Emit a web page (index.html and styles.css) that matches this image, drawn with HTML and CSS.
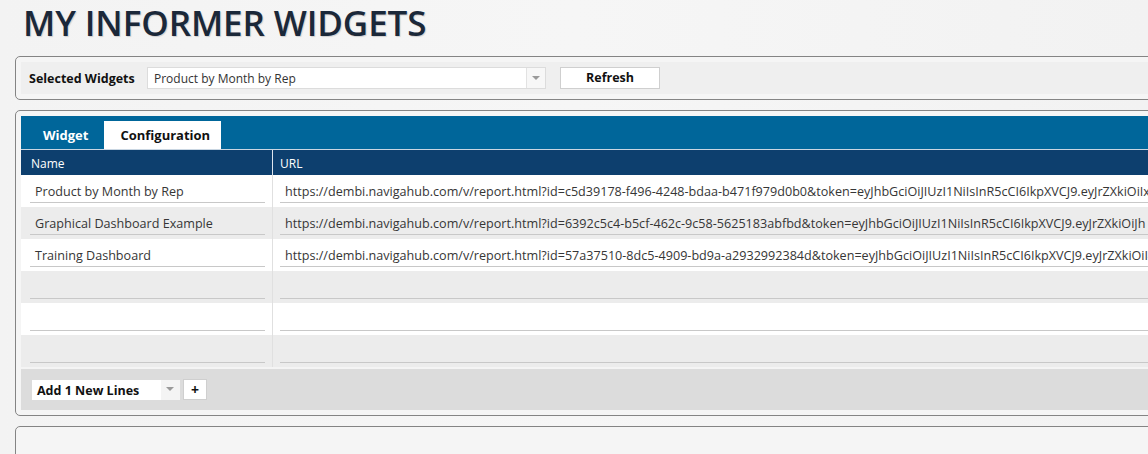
FILE: index.html
```html
<!DOCTYPE html>
<html lang="en">
<head>
<meta charset="utf-8">
<title>My Informer Widgets</title>
<link rel="stylesheet" href="styles.css">
</head>
<body>
<h1 class="title">MY INFORMER WIDGETS</h1>

<section class="panel">
  <div class="select-bar">
    <span class="select-label">Selected Widgets</span>
    <div class="combo combo-widgets">
      <span class="combo-text">Product by Month by Rep</span>
      <span class="combo-arrow"></span>
    </div>
    <button class="btn btn-refresh" type="button">Refresh</button>
  </div>
</section>

<section class="panel">
  <div class="tabs">
    <span class="tab">Widget</span>
    <span class="tab tab-active">Configuration</span>
  </div>
  <div class="grid">
    <div class="grid-row grid-head">
      <div class="cell cell-name">Name</div>
      <div class="cell cell-url">URL</div>
    </div>
    <div class="grid-row">
      <div class="cell cell-name"><div class="field">Product by Month by Rep</div></div>
      <div class="cell cell-url"><div class="field">https://dembi.navigahub.com/v/report.html?id=c5d39178-f496-4248-bdaa-b471f979d0b0&amp;token=eyJhbGciOiJIUzI1NiIsInR5cCI6IkpXVCJ9.eyJrZXkiOiIx</div></div>
    </div>
    <div class="grid-row alt">
      <div class="cell cell-name"><div class="field">Graphical Dashboard Example</div></div>
      <div class="cell cell-url"><div class="field">https://dembi.navigahub.com/v/report.html?id=6392c5c4-b5cf-462c-9c58-5625183abfbd&amp;token=eyJhbGciOiJIUzI1NiIsInR5cCI6IkpXVCJ9.eyJrZXkiOiJh</div></div>
    </div>
    <div class="grid-row">
      <div class="cell cell-name"><div class="field">Training Dashboard</div></div>
      <div class="cell cell-url"><div class="field">https://dembi.navigahub.com/v/report.html?id=57a37510-8dc5-4909-bd9a-a2932992384d&amp;token=eyJhbGciOiJIUzI1NiIsInR5cCI6IkpXVCJ9.eyJrZXkiOiI4</div></div>
    </div>
    <div class="grid-row alt">
      <div class="cell cell-name"><div class="field"></div></div>
      <div class="cell cell-url"><div class="field"></div></div>
    </div>
    <div class="grid-row">
      <div class="cell cell-name"><div class="field"></div></div>
      <div class="cell cell-url"><div class="field"></div></div>
    </div>
    <div class="grid-row alt">
      <div class="cell cell-name"><div class="field"></div></div>
      <div class="cell cell-url"><div class="field"></div></div>
    </div>
  </div>
  <div class="grid-footer">
    <div class="combo combo-lines">
      <span class="combo-text">Add 1 New Lines</span>
      <span class="combo-arrow"></span>
    </div>
    <button class="btn btn-plus" type="button">+</button>
  </div>
</section>

<section class="panel panel-empty"></section>
</body>
</html>
```

FILE: styles.css
```css
html, body {
  margin: 0;
  padding: 0;
}
body {
  width: 1148px;
  height: 454px;
  overflow: hidden;
  background: linear-gradient(90deg, #f3f3f3 0%, #f6f6f6 50%, #f2f2f2 100%);
  font-family: "Open Sans", "Noto Sans", "DejaVu Sans", sans-serif;
  color: #333;
}

.title {
  margin: 0;
  height: 56px;
  padding-left: 23px;
  font-family: "Open Sans", "Noto Sans", sans-serif;
  font-size: 35px;
  font-weight: 600;
  line-height: 45px;
  color: #1b2839;
  letter-spacing: -0.1px;
  text-shadow: 1px 1px 1px rgba(0, 0, 0, 0.15);
}

.panel {
  box-sizing: border-box;
  width: 1220px;
  margin: 0 0 10px 15px;
  padding: 5px;
  border: 1px solid #848484;
  border-radius: 5px;
  background: #f5f5f5;
}

/* selection bar */
.select-bar {
  height: 32px;
  display: flex;
  align-items: center;
  background: #efefef;
  padding-left: 8px;
}
.select-label {
  font-size: 12.5px;
  font-weight: 700;
  color: #111;
  width: 118px;
  padding-top: 1px;
}
.combo {
  display: flex;
  align-items: stretch;
  background: #fff;
  border: 1px solid #dcdcdc;
  box-sizing: border-box;
}
.combo-widgets {
  width: 399px;
  height: 22px;
}
.combo-text {
  flex: 1;
  font-size: 12px;
  line-height: 20px;
  padding: 1px 0 0 6px;
  color: #333;
  white-space: nowrap;
}
.combo-arrow {
  width: 18px;
  border-left: 1px solid #e2e2e2;
  background: #f7f7f7;
  position: relative;
}
.combo-arrow::after {
  content: "";
  position: absolute;
  left: 5px;
  top: 8px;
  border-left: 4px solid transparent;
  border-right: 4px solid transparent;
  border-top: 4px solid #9a9a9a;
}
.btn {
  font-family: "Open Sans", "Noto Sans", sans-serif;
  background: #fff;
  border: 1px solid #cfcfcf;
  color: #111;
  font-weight: 700;
  padding: 0;
  box-sizing: border-box;
}
.btn-refresh {
  margin-left: 14px;
  width: 100px;
  height: 22px;
  font-size: 12.5px;
  line-height: 18px;
}

/* tabs */
.tabs {
  height: 33px;
  display: flex;
  align-items: flex-end;
  background: #00669a;
  border-bottom: 1px solid #c9d6e2;
  padding-left: 6px;
}
.tab {
  height: 28px;
  line-height: 29px;
  padding: 0 16px;
  font-size: 13px;
  font-weight: 700;
  color: #fff;
}
.tab-active {
  background: #fff;
  color: #111;
  padding: 0 16px;
  width: 85px;
  text-align: center;
}

/* grid */
.grid {
  border-bottom: 2px solid #f4f4f4;
}
.grid-row {
  display: flex;
  height: 32px;
  background: #fff;
}
.grid-row.alt {
  background: #ececec;
}
.grid-head {
  height: 25px;
  background: #0d3f6e;
  color: #fff;
  font-size: 12px;
  line-height: 25px;
}
.cell {
  box-sizing: border-box;
}
.grid-head .cell {
  padding-top: 1px;
}
.cell-name {
  width: 252px;
  border-right: 1px solid #e0e0e0;
  padding: 0 7px 0 9px;
}
.cell-url {
  flex: 1;
  padding: 0 0 0 7px;
  overflow: hidden;
}
.grid-head .cell-name {
  padding-left: 10px;
  border-right-color: #dfe6ee;
}
.grid-head .cell-url {
  padding-left: 7px;
}
.field {
  height: 28px;
  box-sizing: border-box;
  border-bottom: 1px solid #c8c8c8;
  padding: 7px 0 0 5px;
  font-size: 12.6px;
  line-height: 19px;
  color: #363636;
  white-space: nowrap;
  overflow: hidden;
}

/* footer */
.grid-footer {
  height: 41px;
  display: flex;
  align-items: center;
  background: #dcdcdc;
  padding-left: 11px;
}
.combo-lines {
  width: 148px;
  height: 20px;
  border: none;
}
.combo-lines .combo-text {
  font-size: 12.5px;
  font-weight: 700;
  color: #111;
  padding: 1px 0 0 5px;
  line-height: 19px;
}
.combo-lines .combo-arrow {
  width: 19px;
  border-left: none;
  background: #f4f4f4;
}
.combo-lines .combo-arrow::after {
  top: 7px;
}
.btn-plus {
  margin-left: 3px;
  width: 24px;
  height: 21px;
  font-size: 14px;
  line-height: 17px;
}

.panel-empty {
  height: 80px;
}
```
